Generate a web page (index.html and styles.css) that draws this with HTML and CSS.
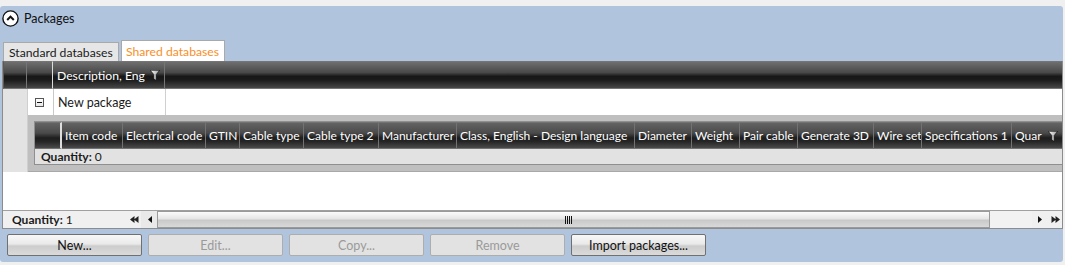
FILE: index.html
```html
<!DOCTYPE html>
<html>
<head>
<meta charset="utf-8">
<link rel="stylesheet" href="styles.css">
</head>
<body>
<div class="panel">
  <div class="title">
    <span class="collapse"><svg width="17" height="17" viewBox="0 0 17 17"><circle cx="8.5" cy="8.5" r="7.6" fill="#fff" stroke="#111" stroke-width="1.4"/><path d="M5.2 10 L8.5 6.6 L11.8 10" fill="none" stroke="#111" stroke-width="2"/></svg></span>
    <span class="title-text">Packages</span>
  </div>
  <div class="tabs">
    <div class="tab">Standard databases</div>
    <div class="tab active">Shared databases</div>
  </div>
  <div class="grid">
    <div class="hdr">
      <div class="hc c-ind"></div>
      <div class="hc c-exp"></div>
      <div class="hc c-desc"><span>Description, Eng</span><svg class="funnel" width="10" height="11" viewBox="0 0 10 11"><defs><linearGradient id="fg" x1="0" x2="1"><stop offset="0" stop-color="#ffffff"/><stop offset="1" stop-color="#9a9a9a"/></linearGradient></defs><path d="M0.3 0.3 H9.7 L6.2 4.5 V10.5 L3.8 8.8 V4.5 Z" fill="url(#fg)" stroke="#000" stroke-width="0.6"/></svg></div>
      <div class="hc c-fill"></div>
    </div>
    <div class="body">
      <div class="indicator"></div>
      <div class="bodymain">
        <div class="row">
          <div class="exp"><span class="box"></span></div>
          <div class="cell c-desc">New package</div>
        </div>
        <div class="detail">
          <div class="sub">
            <div class="shdr">
              <div class="sc s0"></div>
              <div class="sc" style="width:61px">Item code</div>
              <div class="sc" style="width:83px">Electrical code</div>
              <div class="sc" style="width:34px">GTIN</div>
              <div class="sc" style="width:64px">Cable type</div>
              <div class="sc" style="width:75px">Cable type 2</div>
              <div class="sc" style="width:78px">Manufacturer</div>
              <div class="sc" style="width:178px">Class, English - Design language</div>
              <div class="sc" style="width:57px">Diameter</div>
              <div class="sc" style="width:48px">Weight</div>
              <div class="sc" style="width:58px">Pair cable</div>
              <div class="sc" style="width:76px">Generate 3D</div>
              <div class="sc" style="width:48px">Wire set</div>
              <div class="sc" style="width:90px">Specifications 1</div>
              <div class="sc s-last"><span>Quar</span><svg class="funnel" width="10" height="11" viewBox="0 0 10 11"><path d="M0.3 0.3 H9.7 L6.2 4.5 V10.5 L3.8 8.8 V4.5 Z" fill="url(#fg)" stroke="#000" stroke-width="0.6"/></svg></div>
            </div>
            <div class="sfoot"><b>Quantity:</b> 0</div>
          </div>
        </div>
      </div>
    </div>
    <div class="empty"></div>
    <div class="foot">
      <div class="qty"><b>Quantity:</b> 1</div>
      <div class="sbtn dbl"><svg width="9" height="7" viewBox="0 0 9 7"><path d="M0 3.5 L4.5 0 V7 Z M4 3.5 L8.5 0 V7 Z" fill="#222"/></svg></div>
      <div class="sbtn sl"><svg width="4" height="7" viewBox="0 0 4 7"><path d="M0 3.5 L4 0 V7 Z" fill="#111"/></svg></div>
      <div class="track"><div class="thumb"><span class="grip"></span></div></div>
      <div class="sbtn sr"><svg width="4" height="7" viewBox="0 0 4 7"><path d="M4 3.5 L0 0 V7 Z" fill="#111"/></svg></div>
      <div class="sbtn dbl"><svg width="9" height="7" viewBox="0 0 9 7"><path d="M9 3.5 L4.5 0 V7 Z M5 3.5 L0.5 0 V7 Z" fill="#222"/></svg></div>
    </div>
  </div>
  <div class="buttons">
    <div class="btn">New...</div>
    <div class="btn disabled">Edit...</div>
    <div class="btn disabled">Copy...</div>
    <div class="btn disabled">Remove</div>
    <div class="btn">Import packages...</div>
  </div>
</div>
</body>
</html>
```
FILE: styles.css
```css
* { box-sizing: border-box; }
body {
  margin: 0;
  background: #f0f0f0;
  font-family: Lato, "Open Sans", sans-serif;
  font-size: 12px;
  color: #1a1a1a;
}
.panel {
  margin-top: 6px;
  width: 1063px;
  height: 256px;
  background: #b0c4de;
  border-radius: 3px;
  display: flex;
  flex-direction: column;
}
.title {
  height: 22px;
  display: flex;
  align-items: center;
  padding: 2px 0 0 2px;
  gap: 5px;
}
.collapse { display: flex; }
.title-text { font-size: 12.5px; color: #111; }
.tabs {
  margin-top: 12px;
  height: 21px;
  display: flex;
  align-items: flex-end;
  padding-left: 3px;
  gap: 2px;
}
.tab {
  height: 19px;
  padding: 0 5px;
  display: flex;
  align-items: center;
  background: #e6e6e6;
  border: 1px solid #a9a9a9;
  border-bottom: none;
  color: #1a1a1a;
  width: 116px;
  white-space: nowrap;
  font-size: 12.2px;
}
.tab.active {
  height: 21px;
  background: #fff;
  color: #f7902a;
  width: 104px;
  padding: 0 4px;
}
.grid {
  margin-left: 2px;
  width: 1061px;
  display: flex;
  flex-direction: column;
  background: #fff;
  border-left: 1px solid #8c8c8c;
  border-right: 1px solid #8c8c8c;
}
.hdr {
  height: 28px;
  display: flex;
  background: #555;
}
.hc {
  border: 1px solid #757575;
  border-left: none;
  background: linear-gradient(#6e6e6e 0%, #4a4a4a 40%, #171717 55%, #1c1c1c 70%, #474747 100%);
  color: #fff;
  display: flex;
  align-items: center;
}
.hc.c-ind { width: 24px; border-left: 1px solid #5a5a5a; }
.hc.c-exp { width: 26px; border-right: 1px solid #dcdcdc; }
.hc.c-desc {
  width: 112px;
  padding: 0 4px 0 4px;
  justify-content: space-between;
  font-size: 12.2px;
  white-space: nowrap;
}
.hc.c-fill { flex: 1; border-right: none; }
.funnel { margin-top: 1px; flex: none; }
.body { display: flex; }
.indicator {
  width: 25px;
  background: #e3e3e3;
  border-right: 1px solid #cfcfcf;
}
.bodymain { flex: 1; display: flex; flex-direction: column; }
.row { height: 26px; display: flex; font-size: 12.5px; }
.exp {
  width: 26px;
  border-right: 1px solid #c9c9c9;
  display: flex;
  align-items: center;
  padding-left: 7px;
}
.box {
  width: 9px; height: 9px;
  border: 1px solid #555;
  background: linear-gradient(#fff, #e8e8e8);
  position: relative;
}
.box::after {
  content: "";
  position: absolute;
  left: 1px; top: 3px;
  width: 5px; height: 1px;
  background: #111;
}
.cell.c-desc {
  width: 112px;
  padding-left: 4px;
  display: flex;
  align-items: center;
  border-right: 1px solid #d0d0d0;
}
.detail {
  height: 57px;
  background: #bfbfbf;
  padding: 6px 0 7px 6px;
  border-bottom: 1px solid #a8a8a8;
}
.sub {
  height: 44px;
  display: flex;
  flex-direction: column;
  border: 1px solid #8f8f8f;
  border-right: none;
}
.shdr {
  height: 27px;
  display: flex;
  background: #5a5a5a;
  overflow: hidden;
}
.sc {
  flex: none;
  border: 1px solid #727272;
  border-left: none;
  background: linear-gradient(#636363 0%, #4a4a4a 40%, #1d1d1d 60%, #262626 75%, #4a4a4a 100%);
  color: #fff;
  display: flex;
  align-items: center;
  padding-left: 3px;
  white-space: nowrap;
  overflow: hidden;
}
.sc.s0 { width: 27px; border-right: 2px solid #dddddd; padding: 0; }
.sc.s-last { flex: 1; justify-content: space-between; padding-right: 4px; border-right: none; }
.sfoot {
  flex: 1;
  background: #e2e2e2;
  padding-left: 6px;
  display: flex;
  align-items: center;
  gap: 3px;
}
.empty { height: 38px; background: #fff; border-top: 1px solid #fff; }
.foot {
  height: 19px;
  display: flex;
  align-items: stretch;
  background: #f0f0f0;
  border-top: 1px solid #a0a0a0;
  border-bottom: 1px solid #8c8c8c;
}
.qty {
  width: 124px;
  padding-left: 9px;
  display: flex;
  align-items: center;
  gap: 3px;
}
.sbtn {
  display: flex;
  align-items: center;
  justify-content: center;
}
.sbtn.dbl { width: 14px; }
.sbtn.sl { width: 16px; background: #e9e9e9; padding-left: 2px; }
.sbtn.sr { width: 16px; }
.track {
  flex: 1;
  display: flex;
  padding-right: 42px;
  background: #f2f2f2;
}
.thumb {
  flex: 1;
  border: 1px solid #9a9a9a;
  background: linear-gradient(#fbfbfb 0%, #e6e6e6 45%, #c9c9c9 55%, #d9d9d9 100%);
  display: flex;
  align-items: center;
  justify-content: center;
}
.grip {
  width: 7px; height: 8px;
  background: repeating-linear-gradient(90deg, #111 0 1px, transparent 1px 2px);
  margin-left: -10px;
}
.buttons {
  display: flex;
  gap: 6px;
  padding: 5px 0 0 7px;
}
.btn {
  width: 135px;
  height: 22px;
  border: 1px solid #707070;
  background: linear-gradient(#f8f8f8 0%, #e9e9e9 45%, #cdcdcd 55%, #dadada 100%);
  display: flex;
  align-items: center;
  justify-content: center;
  color: #111;
  border-radius: 2px;
  font-size: 12.5px;
}
.btn.disabled {
  border-color: #adadad;
  background: #e2e2e2;
  color: #9a9a9a;
}
```
